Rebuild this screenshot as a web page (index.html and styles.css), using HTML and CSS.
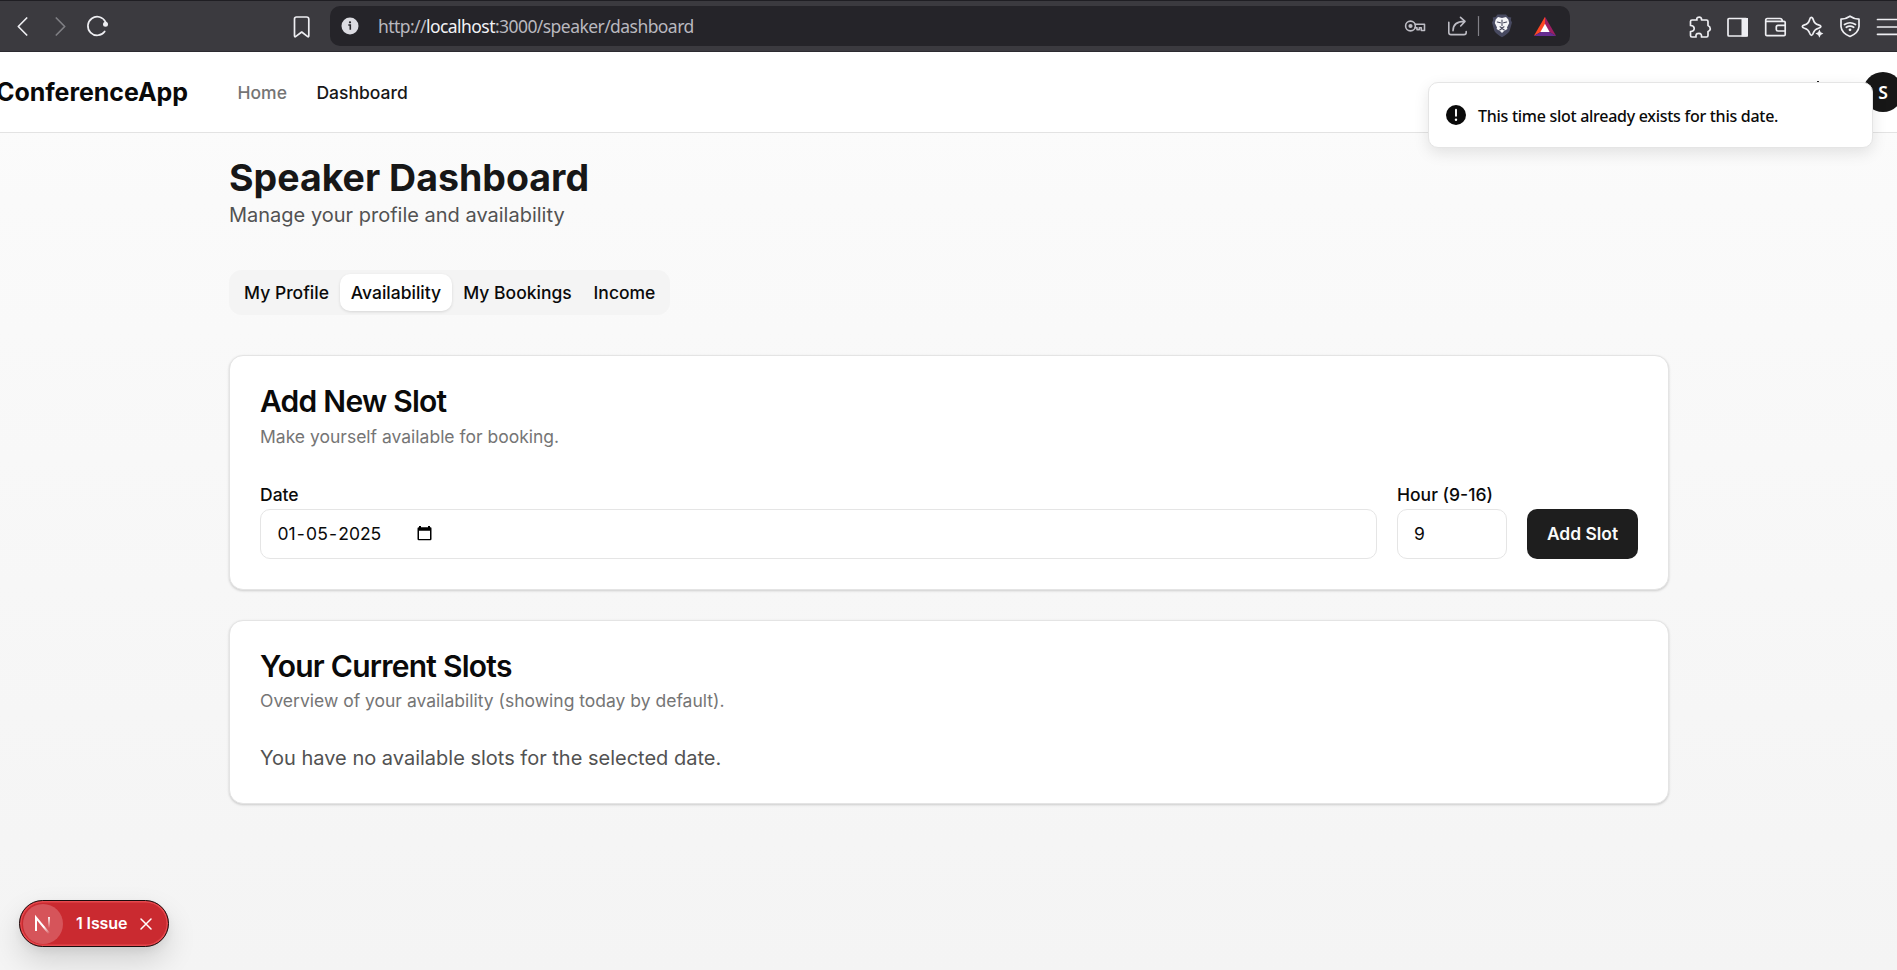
FILE: index.html
```html
<!DOCTYPE html>
<html lang="en">
<head>
<meta charset="utf-8">
<title>Speaker Dashboard</title>
<link rel="stylesheet" href="styles.css">
</head>
<body>
<div class="toolbar">
  <svg class="tb-left" width="330" height="50" viewBox="0 0 330 50" fill="none" stroke="#eeeef2" stroke-width="1.7" stroke-linecap="round" stroke-linejoin="round">
    <path d="M26.700 17 L18.300 25.500 L26.700 34"/>
    <path stroke="#7f7f84" d="M56.300 17 L64.700 25.500 L56.300 34"/>
    <path d="M105.500 20.800 A9.300 9.300 0 1 0 104.700 30.500"/>
    <circle cx="105.500" cy="23.300" r="2.500" fill="#eeeef2" stroke="none"/>
    <path d="M296.500 16 H306.500 Q308.800 16 308.800 18.300 V34.800 Q308.800 36.400 307.400 35.400 L301.700 31 L295.900 35.400 Q294.500 36.400 294.500 34.800 V18 Q294.500 16 296.500 16Z" />
  </svg>
  <div class="address">
    <svg class="info" width="18" height="18" viewBox="0 0 18 18"><circle cx="9" cy="9" r="8.500" fill="#dcdce2"/><circle cx="9" cy="5.300" r="1.150" fill="#27262b"/><path d="M7.300 8h2v4.700" fill="none" stroke="#27262b" stroke-width="1.600"/></svg>
    <span class="url">http://<b>localhost</b>:3000/speaker/dashboard</span>
    <svg class="addr-icons" width="170" height="40" viewBox="0 0 170 40" fill="none" stroke="#bdbcc4" stroke-width="1.600" stroke-linejoin="round" stroke-linecap="round">
      <circle cx="10.500" cy="20" r="4.900"/><circle cx="10.500" cy="20" r="2.100" fill="#bdbcc4" stroke="none"/>
      <path d="M15.200 18.200 H24.500 V24.500 H21.300 V21.700 H19.300 V23.700 H17 V21.800 H15"/>
      <path d="M48.800 16.300 V26.500 Q48.800 28.600 51 28.600 H64 Q66.200 28.600 66.200 26.500 V25.500"/>
      <path d="M53 24.800 Q53 15.400 64.500 15.400 M60.500 11.300 L65 15.400 L60.700 20"/>
      <path d="M78.500 10.500 V29.500" stroke="#828188" stroke-width="1.200"/>
      <path stroke="none" fill="#484a61" d="M97.500 8.500 L106 8.500 L108.300 11 L111.300 11.500 L110.800 14 L112 16.500 L109.600 25 Q108.500 27.500 102 31.200 Q95.500 27.500 94.400 25 L92 16.500 L93.200 14 L92.700 11.500 L95.500 11 Z"/>
      <path stroke="none" fill="#f5f5f8" d="M98 11 L102 12 L106 11 L108.300 13.500 L109.200 17 L107 21.500 L107.400 23 L104 25 L102 27 L100 25 L96.600 23 L97 21.500 L94.800 17 L95.700 13.500 Z"/>
      <path stroke="#44465b" stroke-width="1.100" d="M97.300 16 L100.400 16.800 M106.700 16 L103.600 16.800 M102 14 V19.500 M100 20.800 L102 22 L104 20.800 M99.700 24 L102 22.500 L104.300 24"/>
      <path stroke="none" fill="#ff4724" d="M145 10.700 L133.800 30 L141.200 25.800 L145 18.500 Z"/>
      <path stroke="none" fill="#9e1f63" d="M145 10.700 L156.200 30 L149 25.800 L145 18.500 Z"/>
      <path stroke="none" fill="#662d91" d="M133.800 30 L141.200 25.800 H149 L156.200 30Z"/>
      <path stroke="none" fill="#fff" d="M145 17.800 L140.400 26 H149.600Z"/>
    </svg>
  </div>
  <svg class="tb-right" width="217" height="50" viewBox="1680 0 217 50" fill="none" stroke="#eeeef2" stroke-width="1.700" stroke-linejoin="round" stroke-linecap="round">
    <path d="M1692 19 H1697 Q1696.200 17 1698.200 16.300 Q1700.700 15.700 1701.400 17.400 L1701.500 19 H1706.500 Q1708 19 1708 20.500 V24.500 Q1710.300 25.500 1710.300 28 Q1710 30 1708 30.500 V34.500 Q1708 36 1706.500 36 H1701.500 Q1702 32.200 1698.500 32.300 Q1695.500 32.300 1696 36 H1692 Q1690.500 36 1690.500 34.500 V30.500 Q1694.300 30.500 1694.200 27.300 Q1694 24.500 1690.500 24.500 V20.500 Q1690.500 19 1692 19Z"/>
    <rect x="1728" y="17.500" width="19" height="17.500" rx="1"/><rect x="1741.500" y="17" width="6.500" height="18.500" fill="#eeeef2" stroke="none"/>
    <path d="M1766 20.300 H1784 Q1785.200 20.300 1785.200 21.500 V33.500 Q1785.200 34.700 1784 34.700 H1767 Q1765.700 34.700 1765.700 33.500 V19.200 Q1765.700 17.500 1767.300 17.500 H1780 Q1782.300 17.500 1782.300 20.300 M1785.200 24.300 H1778 Q1776.300 24.300 1776.300 26 V28.500 Q1776.300 30 1778 30 H1785.200"/>
    <path d="M1811.200 16.300 Q1812.600 16.300 1813.400 19 Q1814.400 22.800 1818.500 23.900 Q1820.900 24.700 1820.900 25.500 Q1820.900 26.400 1818.500 27.200 Q1814.400 28.500 1813.400 31.800 Q1812.700 34.300 1811.400 34.300 Q1810.300 34.300 1809.500 31.800 Q1808.500 28.300 1804.500 27.200 Q1802.300 26.500 1802.300 25.500 Q1802.300 24.700 1804.500 23.900 Q1808.500 22.800 1809.500 19 Q1810.200 16.300 1811.200 16.300Z"/>
    <path stroke="none" fill="#eeeef2" d="M1819.400 28.500 L1820.700 31.300 L1823.400 32.600 L1820.700 33.900 L1819.400 36.700 L1818.100 33.900 L1815.400 32.600 L1818.100 31.300Z"/>
    <path d="M1850 15.200 Q1854 18 1859 18.200 V25.500 Q1858.500 32 1850 35.500 Q1841.500 32 1841 25.500 V18.200 Q1846 18 1850 15.200Z"/>
    <path d="M1844.500 23.500 Q1850 20 1855.500 23.500 M1846.300 26.300 Q1850 23.800 1853.700 26.300"/><circle cx="1850" cy="28.800" r="1.400" fill="#eeeef2" stroke="none"/>
    <path d="M1877.500 18.500 H1900 M1877.500 26 H1900 M1877.500 33.300 H1900"/>
  </svg>
</div>

<header class="nav">
  <span class="brand">ConferenceApp</span>
  <nav class="links"><span class="home">Home</span><span class="dash">Dashboard</span></nav>
  <span class="tick"></span>
  <span class="avatar">S</span>
</header>

<main class="main">
  <h1>Speaker Dashboard</h1>
  <p class="sub">Manage your profile and availability</p>
  <div class="tabs">
    <span class="tab t1">My Profile</span><span class="tab t2 active">Availability</span><span class="tab t3">My Bookings</span><span class="tab t4">Income</span>
  </div>
  <section class="card">
    <h2 class="add-title">Add New Slot</h2>
    <p class="desc desc-add">Make yourself available for booking.</p>
    <div class="form">
      <div class="field grow">
        <label>Date</label>
        <div class="input"><span class="date"><span>01</span><span>-</span><span>05</span><span>-</span><span>2025</span></span>
          <svg class="cal" width="15" height="16" viewBox="0 0 15 16"><path fill="#000" fill-rule="evenodd" d="M2 1h2v1.300h7V1h2v1.300h.5Q14.500 2.300 14.500 3.500V14Q14.500 15.300 13.300 15.300H1.800Q.5 15.300.5 14V3.500Q.5 2.300 2 2.300ZM2 5.800V13.900H13V5.800Z"/></svg>
        </div>
      </div>
      <div class="field hour">
        <label>Hour (9-16)</label>
        <div class="input">9</div>
      </div>
      <button class="btn">Add Slot</button>
    </div>
  </section>
  <section class="card slots">
    <h2 class="slots-title">Your Current Slots</h2>
    <p class="desc desc-slots">Overview of your availability (showing today by default).</p>
    <p class="empty">You have no available slots for the selected date.</p>
  </section>
</main>

<div class="toast">
  <svg width="20" height="20" viewBox="0 0 20 20"><circle cx="10" cy="10" r="10" fill="#0a0a0a"/><path d="M10 4.800V10.800" stroke="#fff" stroke-width="1.900" stroke-linecap="round"/><circle cx="10" cy="14.800" r="1.200" fill="#fff"/></svg>
  <span>This time slot already exists for this date.</span>
</div>

<div class="issue">
  <span class="mark"><svg width="40" height="40" viewBox="0 0 40 40" fill="none">
    <defs><linearGradient id="g1" x1="22" y1="22" x2="27" y2="29" gradientUnits="userSpaceOnUse"><stop stop-color="#fff"/><stop offset="1" stop-color="#fff" stop-opacity="0"/></linearGradient>
    <linearGradient id="g2" x1="26" y1="13" x2="26" y2="24" gradientUnits="userSpaceOnUse"><stop stop-color="#fff"/><stop offset="1" stop-color="#fff" stop-opacity="0"/></linearGradient></defs>
    <path d="M13 27V13.500L26.500 30" stroke="url(#g1)" stroke-width="2"/><path d="M26 13V24" stroke="url(#g2)" stroke-width="1.800"/></svg></span>
  <span class="issue-text">1 Issue</span>
  <svg class="close" width="12" height="12" viewBox="0 0 12 12" stroke="#fff" stroke-width="1.500" stroke-linecap="round"><path d="M1 1L11 11M11 1L1 11"/></svg>
</div>
</body>
</html>
```
FILE: styles.css
```css
* { box-sizing: border-box; }
body { margin: 0; width: 1897px; height: 970px; overflow: hidden; font-family: Inter, "Liberation Sans", sans-serif; color: #0a0a0a; background: linear-gradient(#fcfcfc 52px, #fafafa 200px, #f4f4f4 970px); }
h1, h2, p { margin: 0; white-space: nowrap; }
svg { display: block; flex: none; }

.toolbar { height: 52px; display: flex; background: #3b3a3f; border-top: 1px solid #1f1e23; border-bottom: 1px solid #2c2b30; }
.address { width: 1240px; height: 40px; margin-top: 5px; border-radius: 10px; background: #252429; display: flex; align-items: center; }
.info { margin-left: 11px; }
.url { margin-left: 19px; flex: 1; font-family: "Noto Sans", sans-serif; font-size: 17.5px; line-height: 38px; height: 38px; color: #b9b8bf; letter-spacing: -0.56px; white-space: nowrap; }
.url b { font-weight: 400; color: #f2f2f6; }
.tb-right { margin-left: 110px; }

.nav { height: 81px; display: flex; align-items: center; background: #fff; border-bottom: 1px solid #e3e3e3; position: relative; }
.brand { width: 238px; margin-left: -4px; font-size: 25px; font-weight: 700; line-height: 30px; white-space: nowrap; letter-spacing: -0.06px; }
.links { display: flex; gap: 29.5px; font-size: 17.5px; line-height: 26px; font-weight: 500; margin: 2px 0 0 3.5px; }
.home { color: #757575; }
.dash { color: #171717; }
.tick { width: 2px; height: 1px; background: #222; position: absolute; left: 1817px; top: 29px; }
.avatar { position: absolute; left: 1863px; top: 20px; width: 40px; height: 40px; border-radius: 50%; background: #171717; color: #fff; font: 600 17.5px/40px "Noto Sans", sans-serif; text-align: center; }

.main { width: 1440px; margin: 22px 0 0 229px; }
h1 { font-size: 37.5px; line-height: 45px; font-weight: 700; color: #171717; }
.sub { font-size: 20px; line-height: 30px; color: #525252; }
.tabs { margin-top: 40px; width: 441px; height: 45px; padding: 4px; border-radius: 12.5px; background: #f4f4f4; display: flex; font-size: 17.5px; line-height: 37px; font-weight: 500; text-align: center; white-space: nowrap; }
.tab { border-radius: 10px; height: 37px; }
.t1 { width: 107px; }
.t2 { width: 112px; }
.t3 { width: 131px; }
.t4 { width: 83px; }
.active { background: #fff; box-shadow: 0 1px 3px rgba(0,0,0,.12); }

.card { margin-top: 40px; height: 235px; padding: 30px; border: 1px solid #e4e4e4; border-radius: 14px; background: #fff; box-shadow: 0 1px 3px rgba(0,0,0,.1), 0 1px 2px rgba(0,0,0,.08); }
.slots { margin-top: 30px; height: 184px; }
h2 { font-size: 30px; line-height: 30px; font-weight: 600; letter-spacing: -0.75px; }
.desc { margin-top: 8px; font-size: 17.5px; line-height: 25px; color: #757575; }
.desc-slots { margin-top: 7px; }
.form { margin-top: 30px; display: flex; align-items: flex-end; gap: 20px; }
.field label { display: block; font-size: 17.5px; line-height: 28px; padding-top: 2px; font-weight: 500; }
.grow { flex: 1; }
.hour { width: 110px; white-space: nowrap; }
.input { height: 50px; border: 1px solid #e5e5e5; border-radius: 10px; padding: 0 16px 2px; display: flex; align-items: center; font-size: 17.5px; background: #fff; }
.date { width: 140px; display: flex; gap: 1.2px; padding-left: 0.5px; }
.btn { width: 111px; height: 50px; border: 0; border-radius: 10px; background: #1e1e1e; color: #fafafa; font: 600 17.4px Inter, sans-serif; padding: 0 0 2px; white-space: nowrap; }
.empty { margin-top: 30px; font-size: 20px; line-height: 30px; color: #525252; }

.toast { position: absolute; left: 1428px; top: 82px; width: 445px; height: 66px; border: 1px solid #e5e5e5; border-radius: 10px; background: #fff; box-shadow: 0 5px 15px rgba(0,0,0,.1); display: flex; align-items: center; gap: 12px; padding-left: 17px; font: 500 16px/24px "Noto Sans", sans-serif; letter-spacing: -0.28px; white-space: nowrap; }
.toast span { padding-top: 2px; }

.issue { position: absolute; left: 19px; top: 900px; width: 150px; height: 47px; border-radius: 24px; background: #ca2a30; border: 1px solid #1c0b0c; box-shadow: inset 0 0 0 1.5px #e5484d, 0 14px 30px rgba(0,0,0,.14), 0 4px 8px rgba(0,0,0,.06); display: flex; align-items: center; padding-left: 3px; color: #fff; }
.mark { width: 40px; height: 40px; border-radius: 50%; background: #d6545a; }
.issue-text { width: 52px; margin: 0 12px 1px 13px; font-size: 16px; line-height: 20px; font-weight: 600; white-space: nowrap; letter-spacing: -0.1px; }
```
